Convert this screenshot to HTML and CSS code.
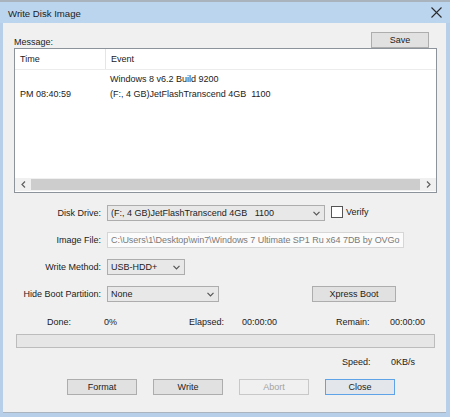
FILE: index.html
```html
<!DOCTYPE html>
<html>
<head>
<meta charset="utf-8">
<link rel="stylesheet" href="styles.css">
</head>
<body>
<div class="screen">
  <div class="bgstrip"></div>
  <div class="titlebar">
    <span class="title">Write Disk Image</span>
    <svg class="close" width="11" height="11" viewBox="0 0 11 11"><path d="M0.5 0.5 L10.5 10.5 M10.5 0.5 L0.5 10.5" stroke="#2b2b2b" stroke-width="1.1" fill="none"/></svg>
  </div>
  <div class="client">
    <div class="msgrow">
      <span class="msglabel">Message:</span>
      <div class="btn save">Save</div>
    </div>
    <div class="list">
      <div class="lhead">
        <div class="c1">Time</div>
        <div class="c2 hsep">Event</div>
      </div>
      <div class="lbody">
        <div class="row"><div class="c1"></div><div class="c2">Windows 8 v6.2 Build 9200</div></div>
        <div class="row"><div class="c1">PM 08:40:59</div><div class="c2">(F:, 4 GB)JetFlashTranscend 4GB&nbsp;&nbsp;1100</div></div>
      </div>
      <div class="hscroll">
        <div class="arrow">
          <svg width="5" height="7" viewBox="0 0 5 7"><path d="M4 0.5 L1 3.5 L4 6.5" stroke="#606060" stroke-width="1.2" fill="none"/></svg>
        </div>
        <div class="thumb"></div>
        <div class="arrow">
          <svg width="5" height="7" viewBox="0 0 5 7"><path d="M1 0.5 L4 3.5 L1 6.5" stroke="#606060" stroke-width="1.2" fill="none"/></svg>
        </div>
      </div>
    </div>

    <div class="frow first">
      <span class="flabel">Disk Drive:</span>
      <div class="combo w-disk"><span>(F:, 4 GB)JetFlashTranscend 4GB&nbsp;&nbsp;&nbsp;1100</span><svg class="chev" width="7" height="5" viewBox="0 0 7 5"><path d="M0.5 0.8 L3.5 3.8 L6.5 0.8" stroke="#555" stroke-width="1.2" fill="none"/></svg></div>
      <span class="check"></span>
      <span class="verify">Verify</span>
    </div>
    <div class="frow">
      <span class="flabel">Image File:</span>
      <div class="textbox">C:\Users\1\Desktop\win7\Windows 7 Ultimate SP1 Ru x64 7DB by OVGo</div>
    </div>
    <div class="frow">
      <span class="flabel">Write Method:</span>
      <div class="combo w-method"><span>USB-HDD+</span><svg class="chev" width="7" height="5" viewBox="0 0 7 5"><path d="M0.5 0.8 L3.5 3.8 L6.5 0.8" stroke="#555" stroke-width="1.2" fill="none"/></svg></div>
    </div>
    <div class="frow">
      <span class="flabel">Hide Boot Partition:</span>
      <div class="combo w-hide"><span>None</span><svg class="chev" width="7" height="5" viewBox="0 0 7 5"><path d="M0.5 0.8 L3.5 3.8 L6.5 0.8" stroke="#555" stroke-width="1.2" fill="none"/></svg></div>
      <div class="btn xpress">Xpress Boot</div>
    </div>

    <div class="status">
      <span>Done:</span>
      <span>0%</span>
      <span>Elapsed:</span>
      <span>00:00:00</span>
      <span>Remain:</span>
      <span>00:00:00</span>
    </div>
    <div class="progress"></div>
    <div class="speed">
      <span class="sp-label">Speed:</span>
      <span>0KB/s</span>
    </div>
    <div class="buttons">
      <div class="btn act">Format</div>
      <div class="btn act">Write</div>
      <div class="btn act disabled">Abort</div>
      <div class="btn act default">Close</div>
    </div>
  </div>
</div>
</body>
</html>
```

FILE: styles.css
```css
* { box-sizing: border-box; }
html, body {
  margin: 0;
  padding: 0;
}
body {
  font-family: "Liberation Sans", Arial, sans-serif;
  font-size: 9px;
  color: #222;
  background: #b7cfe9;
}
.screen {
  width: 450px;
  height: 417px;
  background: #b7cfe9;
  overflow: hidden;
  display: flex;
  flex-direction: column;
}
.bgstrip {
  height: 2px;
  background: #a9b3bd;
}
.titlebar {
  height: 21px;
  background: #bcd5ee;
  display: flex;
  align-items: center;
  padding: 0 8px 0 8px;
}
.title {
  font-size: 9.6px;
  color: #1c1c1c;
  flex: 1;
  padding-top: 1px;
}
.close {
  margin-top: -1px;
}
.client {
  margin-left: 3px;
  width: 443px;
  height: 390px;
  background: #f0f0f0;
  border-bottom: 1px solid #a9b4bf;
  padding: 0 9px 0 11px;
  display: flex;
  flex-direction: column;
}
.msgrow {
  margin-top: 9px;
  height: 16px;
  display: flex;
  align-items: flex-end;
  justify-content: space-between;
}
.msglabel {
  padding-bottom: 1px;
}
.btn {
  height: 16px;
  background: #e1e1e1;
  border: 1px solid #adadad;
  display: flex;
  align-items: center;
  justify-content: center;
}
.save {
  width: 58px;
  margin-right: 8px;
}
.list {
  height: 145px;
  background: #fff;
  border: 1px solid #8d939b;
  display: flex;
  flex-direction: column;
}
.lhead {
  height: 21px;
  display: flex;
  border-bottom: 1px solid #ececec;
}
.lhead .c1, .lhead .c2 {
  display: flex;
  align-items: center;
}
.c1 {
  width: 90px;
  padding-left: 5px;
}
.c2 {
  padding-left: 5px;
}
.hsep {
  border-left: 1px solid #e5e5e5;
}
.lbody {
  flex: 1;
  padding-top: 1px;
}
.row {
  height: 15px;
  display: flex;
  align-items: center;
}
.hscroll {
  height: 13px;
  display: flex;
  background: #f0f0f0;
  margin-bottom: 1px;
}
.arrow {
  width: 16px;
  display: flex;
  align-items: center;
  justify-content: center;
}
.thumb {
  flex: 1;
  background: #cdcdcd;
  margin: 1px 0;
}
.frow {
  margin-top: 11px;
  height: 16px;
  display: flex;
  align-items: center;
}
.frow.first {
  margin-top: 12px;
}
.flabel {
  width: 87px;
  text-align: right;
  margin-right: 6px;
}
.combo {
  height: 16px;
  background: #e8e8e8;
  border: 1px solid #adadad;
  display: flex;
  align-items: center;
  justify-content: space-between;
  padding: 0 4px 0 3px;
}
.w-disk { width: 218px; }
.w-method { width: 78px; }
.w-hide { width: 112px; }
.check {
  width: 12px;
  height: 12px;
  border: 1px solid #555;
  background: #fff;
  margin-left: 6px;
  margin-top: -2px;
}
.verify {
  margin-left: 3px;
  margin-top: -3px;
}
.textbox {
  width: 297px;
  height: 16px;
  background: #fbfbfb;
  border: 1px solid #d6d6d6;
  color: #7a7a7a;
  display: flex;
  align-items: center;
  padding-left: 3px;
  white-space: nowrap;
  overflow: hidden;
  letter-spacing: -0.04px;
}
.xpress {
  width: 84px;
  margin-left: 93px;
}
.status {
  margin-top: 13px;
  height: 14px;
  display: grid;
  grid-template-columns: 57px 85px 53px 94px 54px 1fr;
  align-items: center;
  padding-left: 33px;
}
.progress {
  margin-top: 5px;
  height: 14px;
  margin-left: 2px;
  margin-right: 2px;
  background: #e6e6e6;
  border: 1px solid #bcbcbc;
}
.speed {
  margin-top: 7px;
  height: 14px;
  display: flex;
  align-items: center;
  padding-left: 328px;
}
.sp-label {
  width: 49px;
}
.buttons {
  margin-top: 10px;
  display: flex;
  gap: 16px;
  padding-left: 53px;
}
.act {
  width: 70px;
}
.disabled {
  background: #f0f0f0;
  border-color: #c8c8c8;
  color: #a3a3a3;
}
.default {
  border-color: #5ea3e8;
  background: #e3e6ea;
}
```
